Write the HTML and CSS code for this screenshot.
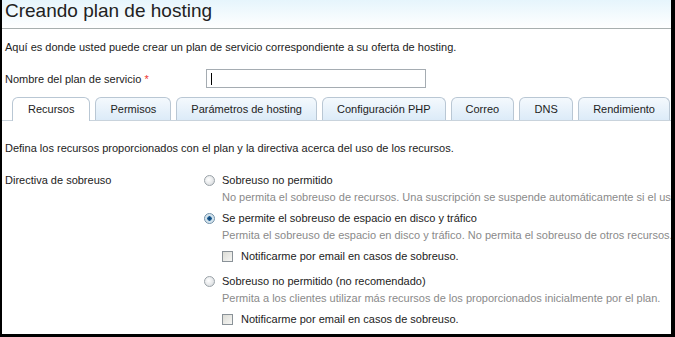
FILE: index.html
```html
<!DOCTYPE html>
<html lang="es">
<head>
<meta charset="utf-8">
<link rel="stylesheet" href="styles.css">
</head>
<body>
<div class="frame">
  <div class="header"><h1 class="title">Creando plan de hosting</h1></div>
  <p class="intro">Aquí es donde usted puede crear un plan de servicio correspondiente a su oferta de hosting.</p>
  <div class="field">
    <label class="field-label">Nombre del plan de servicio <span class="req">*</span></label>
    <div class="input"><span class="caret"></span></div>
  </div>
  <div class="tabs">
    <div class="tab active">Recursos</div>
    <div class="tab">Permisos</div>
    <div class="tab">Parámetros de hosting</div>
    <div class="tab">Configuración PHP</div>
    <div class="tab">Correo</div>
    <div class="tab">DNS</div>
    <div class="tab">Rendimiento</div>
  </div>
  <p class="section-desc">Defina los recursos proporcionados con el plan y la directiva acerca del uso de los recursos.</p>
  <div class="row">
    <div class="row-label">Directiva de sobreuso</div>
    <div class="options">
      <div class="opt">
        <div class="opt-line"><span class="radio"></span><span>Sobreuso no permitido</span></div>
        <div class="hint">No permita el sobreuso de recursos. Una suscripción se suspende automáticamente si el uso de los recursos excede</div>
      </div>
      <div class="opt">
        <div class="opt-line"><span class="radio checked"></span><span>Se permite el sobreuso de espacio en disco y tráfico</span></div>
        <div class="hint">Permita el sobreuso de espacio en disco y tráfico. No permita el sobreuso de otros recursos.</div>
        <div class="check-line"><span class="checkbox"></span><span>Notificarme por email en casos de sobreuso.</span></div>
      </div>
      <div class="opt">
        <div class="opt-line"><span class="radio"></span><span>Sobreuso no permitido (no recomendado)</span></div>
        <div class="hint">Permita a los clientes utilizar más recursos de los proporcionados inicialmente por el plan.</div>
        <div class="check-line"><span class="checkbox"></span><span>Notificarme por email en casos de sobreuso.</span></div>
      </div>
    </div>
  </div>
</div>
</body>
</html>
```

FILE: styles.css
```css
html, body {
  margin: 0;
  padding: 0;
  background: #000;
}
body {
  width: 675px;
  height: 337px;
  overflow: hidden;
}
.frame {
  box-sizing: border-box;
  width: 675px;
  height: 337px;
  border-left: 2px solid #000;
  border-right: 4px solid #000;
  border-bottom: 3px solid #000;
  background: #fff;
  font-family: "Liberation Sans", Arial, sans-serif;
  font-size: 11px;
  color: #222;
  overflow: hidden;
}
.header {
  height: 28px;
  border-bottom: 1px solid #a8afaf;
  background: linear-gradient(to bottom, #e6f5fc 0%, #ffffff 100%);
}
.title {
  margin: 0;
  padding: 0 0 0 3px;
  font-family: "Liberation Sans", Arial, sans-serif;
  font-weight: normal;
  font-size: 19px;
  line-height: 22px;
  color: #222;
}
.intro {
  margin: 11px 0 0 3px;
  line-height: 14px;
}
.field {
  display: flex;
  align-items: center;
  margin-top: 15px;
  height: 19px;
}
.field-label {
  width: 201px;
  padding-left: 3px;
  flex: none;
}
.req { color: #e33; }
.input {
  box-sizing: border-box;
  width: 220px;
  height: 19px;
  border: 1px solid #a5acb2;
  background: #fff;
  display: flex;
  align-items: center;
  padding-left: 4px;
}
.caret {
  width: 1px;
  height: 12px;
  background: #000;
}
.tabs {
  display: flex;
  gap: 5px;
  margin-top: 9px;
  padding-left: 10px;
  height: 23px;
  border-bottom: 1px solid #c9d3dc;
  align-items: flex-end;
}
.tab {
  box-sizing: border-box;
  height: 23px;
  min-width: 54px;
  padding: 0 14px;
  border: 1px solid #b9c7d4;
  border-bottom: none;
  border-radius: 6px 6px 0 0;
  background: linear-gradient(to bottom, #f4f9fd 0%, #dcebf8 100%);
  line-height: 22px;
  text-align: center;
  white-space: nowrap;
  color: #222;
  flex: none;
}
.tab.active {
  background: #fff;
  height: 24px;
  margin-bottom: -1px;
  padding: 0 15px;
}
.section-desc {
  margin: 20px 0 0 3px;
  line-height: 14px;
}
.row {
  display: flex;
  margin-top: 18px;
}
.row-label {
  width: 199px;
  padding-left: 3px;
  line-height: 14px;
  flex: none;
}
.options {
  display: flex;
  flex-direction: column;
  gap: 7px;
  white-space: nowrap;
}
.opt-line {
  display: flex;
  align-items: center;
  gap: 7px;
  line-height: 14px;
}
.hint {
  color: #8a8a8a;
  padding-left: 18px;
  line-height: 14px;
  margin-top: 3px;
}
.radio {
  box-sizing: border-box;
  width: 11px;
  height: 11px;
  border-radius: 50%;
  border: 1px solid #9aa2a8;
  background: radial-gradient(circle at 40% 40%, #ffffff 0%, #e4e6e8 60%, #c8ccd0 100%);
  flex: none;
}
.radio.checked {
  border-color: #6f8fa8;
  background: radial-gradient(circle, #0e3c6a 0%, #1d5f97 32%, #c8dce8 38%, #eef4f8 100%);
}
.check-line {
  display: flex;
  align-items: center;
  gap: 8px;
  margin-top: 7px;
  margin-bottom: 4px;
  padding-left: 18px;
  line-height: 14px;
}
.checkbox {
  box-sizing: border-box;
  width: 11px;
  height: 11px;
  border: 1px solid #8a9298;
  background: linear-gradient(135deg, #dcdcd6 0%, #f6f6f4 100%);
  flex: none;
}
```
